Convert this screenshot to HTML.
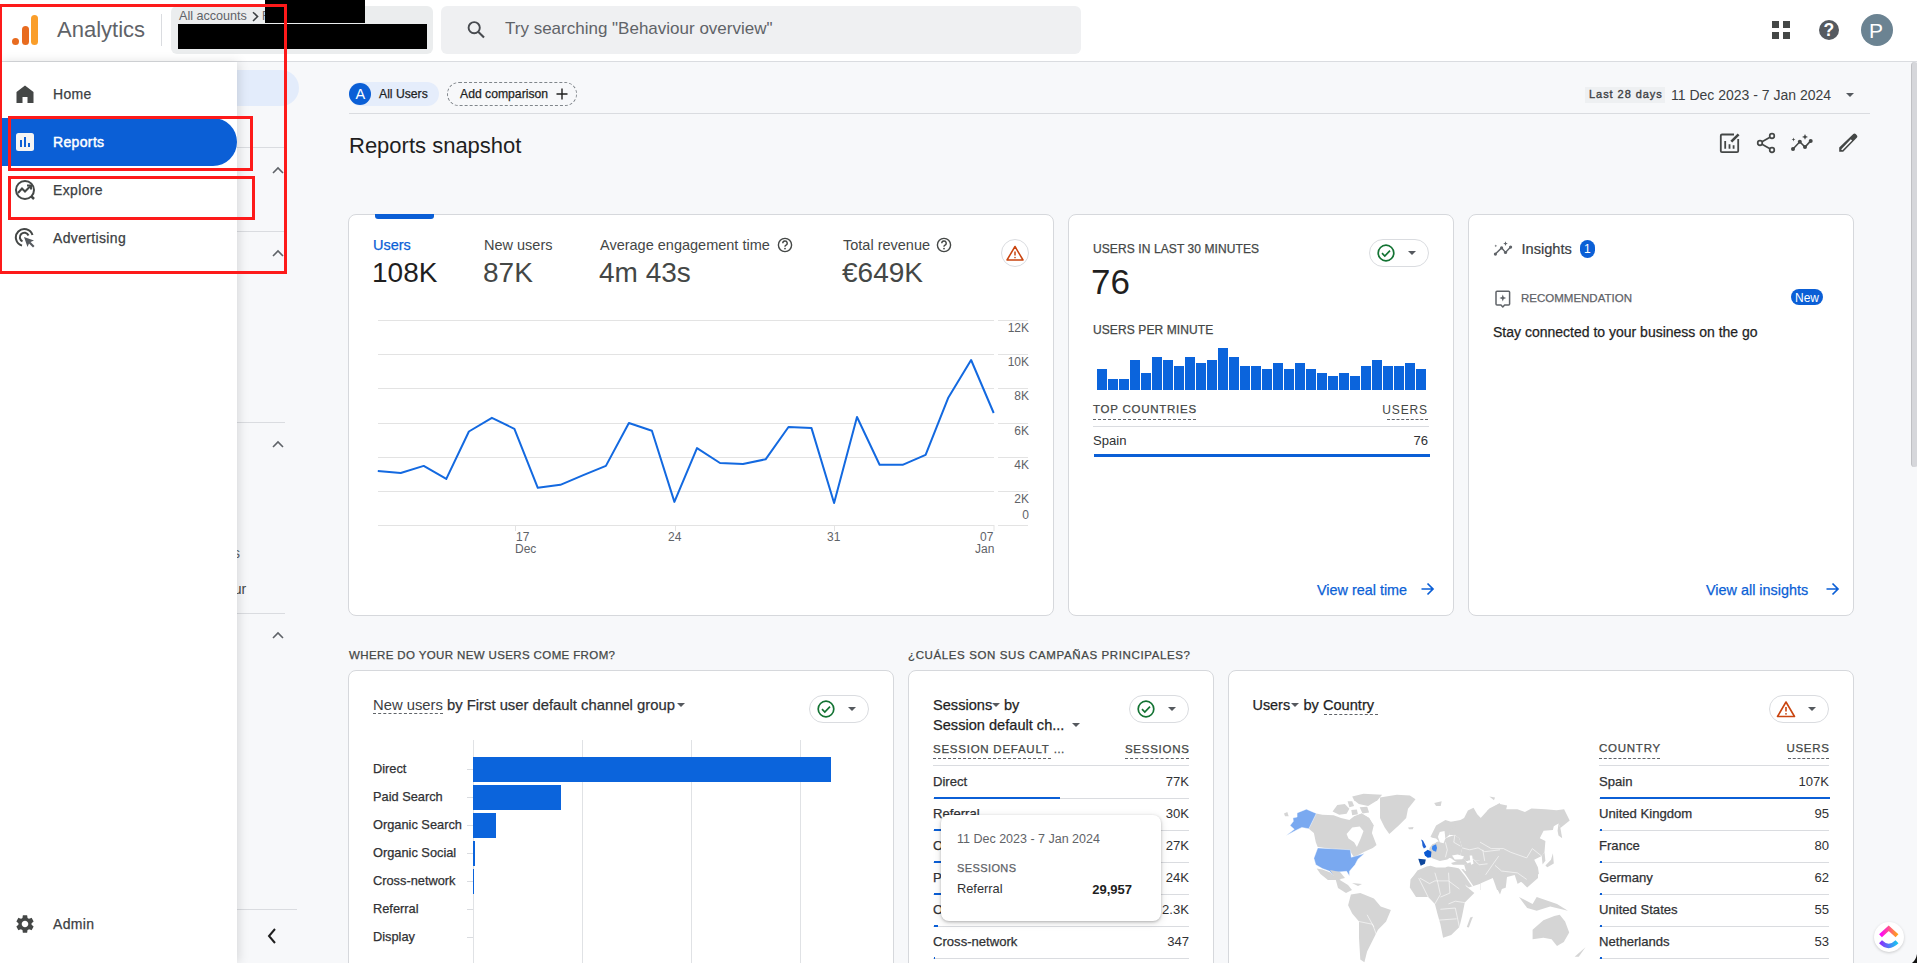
<!DOCTYPE html>
<html><head><meta charset="utf-8">
<style>
*{box-sizing:border-box;margin:0;padding:0}
html,body{width:1917px;height:963px;overflow:hidden;background:#f7f8fa;font-family:"Liberation Sans",sans-serif;color:#1f1f1f}
.a{position:absolute;white-space:nowrap}
.t{position:absolute;white-space:nowrap;line-height:1}
.card{position:absolute;background:#fff;border:1px solid #d6d8dc;border-radius:8px}
.chip{position:absolute;border:1px solid #dadce0;border-radius:15px;background:#fff}
.hl{position:absolute;height:1px;background:#dadce0}
.g{color:#5f6368}
.m{-webkit-text-stroke-width:0.25px}
.dash{position:absolute;height:0;border-top:1px dashed #5f6368}
</style></head><body>

<!-- HEADER -->
<div class="a" style="left:0;top:0;width:1917px;height:61px;background:#fff"></div>
<div class="a" style="left:0;top:61px;width:1917px;height:1px;background:#dadce0"></div>

<!-- logo -->
<div class="a" style="left:12px;top:37.5px;width:7px;height:7px;border-radius:50%;background:#e86b1f"></div>
<div class="a" style="left:21.5px;top:26px;width:7px;height:19px;border-radius:3.5px;background:#e86b1f"></div>
<div class="a" style="left:30.5px;top:15px;width:7.5px;height:30px;border-radius:3.75px;background:#fa9e2a"></div>
<div class="t g" style="left:57px;top:19px;font-size:22px">Analytics</div>
<div class="a" style="left:161px;top:14px;width:1px;height:32px;background:#dadce0"></div>

<!-- account -->
<div class="a" style="left:171px;top:6px;width:262px;height:48px;border-radius:6px;background:#ebedee"></div>
<div class="t g" style="left:179px;top:10px;font-size:12.6px">All accounts</div>
<svg class="a" style="left:251px;top:11px" width="9" height="11" viewBox="0 0 9 11"><path d="M2 1.2 L6.6 5.6 L2 10" fill="none" stroke="#3c4043" stroke-width="1.5"/></svg>
<div class="t g" style="left:262px;top:10px;font-size:12px">F</div>
<div class="a" style="left:265px;top:0;width:100px;height:23px;background:#000"></div>
<div class="a" style="left:178px;top:24px;width:249px;height:25px;background:#000"></div>

<!-- search -->
<div class="a" style="left:441px;top:6px;width:640px;height:48px;border-radius:6px;background:#eff0f2"></div>
<svg class="a" style="left:465px;top:20px" width="22" height="20" viewBox="0 0 22 20"><circle cx="9.2" cy="7.7" r="5.6" fill="none" stroke="#474a4f" stroke-width="1.9"/><path d="M13.2 11.8 L19 17.6" stroke="#474a4f" stroke-width="2.1"/></svg>
<div class="t g" style="left:505px;top:19.5px;font-size:17px">Try searching "Behaviour overview"</div>

<!-- right icons -->
<div class="a" style="left:1772px;top:21px;width:7px;height:7px;background:#444746"></div>
<div class="a" style="left:1783px;top:21px;width:7px;height:7px;background:#444746"></div>
<div class="a" style="left:1772px;top:32px;width:7px;height:7px;background:#444746"></div>
<div class="a" style="left:1783px;top:32px;width:7px;height:7px;background:#444746"></div>
<div class="a" style="left:1819px;top:20px;width:20px;height:20px;border-radius:50%;background:#555a60"></div>
<div class="t" style="left:1823.5px;top:21.5px;font-size:17.5px;font-weight:bold;color:#fff">?</div>
<div class="a" style="left:1861px;top:14px;width:32px;height:32px;border-radius:50%;background:#6b8392"></div>
<div class="t" style="left:1869px;top:20px;font-size:21px;color:#fff">P</div>



<!-- MAIN TOP -->
<div class="a" style="left:349px;top:82px;width:90px;height:24px;border-radius:12px;background:#e5edfb"></div>
<div class="a" style="left:349px;top:83px;width:22px;height:22px;border-radius:50%;background:#0b5fd6"></div>
<div class="t" style="left:355.5px;top:86.5px;font-size:14.5px;color:#fff">A</div>
<div class="t m" style="left:379px;top:88px;font-size:12.2px;color:#1f1f1f">All Users</div>
<div class="a" style="left:447px;top:82px;width:130px;height:24px;border-radius:12px;border:1px dashed #80868b"></div>
<div class="t m" style="left:460px;top:88px;font-size:12.2px;color:#1f1f1f">Add comparison</div>
<svg class="a" style="left:556px;top:88px" width="12" height="12" viewBox="0 0 12 12"><path d="M6 0.5 V11.5 M0.5 6 H11.5" stroke="#1f1f1f" stroke-width="1.4"/></svg>
<div class="hl" style="left:349px;top:113px;width:1521px"></div>

<div class="a" style="left:1585px;top:87px;width:80px;height:16px;background:#eef0f2"></div>
<div class="t" style="left:1589px;top:89px;font-size:11px;color:#3c4043;letter-spacing:0.95px;-webkit-text-stroke-width:0.35px">Last 28 days</div>
<div class="t" style="left:1671px;top:88px;font-size:14px;color:#3c4043">11 Dec 2023 - 7 Jan 2024</div>
<svg class="a" style="left:1845px;top:92px" width="10" height="6" viewBox="0 0 10 6"><path d="M1 1 H9 L5 5 Z" fill="#55595e"/></svg>

<div class="t" style="left:349px;top:135px;font-size:22px;color:#1f1f1f">Reports snapshot</div>

<!-- toolbar icons -->
<svg class="a" style="left:1700px;top:120px" width="170" height="45" viewBox="1700 120 170 45">
<g fill="none" stroke="#444746">
<path d="M1734 134.5 H1722 Q1720.8 134.5 1720.8 135.7 V151 Q1720.8 152.2 1722 152.2 H1737 Q1738.2 152.2 1738.2 151 V139" stroke-width="1.8"/>
<path d="M1725.2 141 V148.7 M1729.5 144.2 V148.7 M1733.6 145.2 V148.7" stroke-width="1.8"/>
<path d="M1731.3 141.6 L1738.6 134.3" stroke-width="2.6"/>
<circle cx="1772" cy="136" r="2.3" stroke-width="1.7"/><circle cx="1760" cy="143" r="2.3" stroke-width="1.7"/><circle cx="1772" cy="150" r="2.3" stroke-width="1.7"/>
<path d="M1762 141.8 L1770 137.2 M1762 144.2 L1770 148.8" stroke-width="1.6"/>
<path d="M1793 149 L1799.8 141.8 L1805 147 L1810.7 140.9" stroke-width="1.6"/>
</g>
<g fill="#444746">
<circle cx="1793" cy="149" r="2"/><circle cx="1799.8" cy="141.8" r="2"/><circle cx="1805" cy="147" r="2"/><circle cx="1810.7" cy="140.9" r="2"/>
<path d="M1805 134 L1805.9 136 L1808 136.9 L1805.9 137.8 L1805 139.8 L1804.1 137.8 L1802 136.9 L1804.1 136 Z"/>
<path d="M1793.5 137.6 L1794 139 L1795.4 139.5 L1794 140 L1793.5 141.4 L1793 140 L1791.6 139.5 L1793 139 Z"/>
<path fill-rule="evenodd" d="M1839.2 151.8 V147.5 L1853.3 133.9 Q1854.5 133 1855.7 134 L1857 135.4 Q1857.8 136.5 1857 137.5 L1843.2 151.8 Z M1841.1 149.6 L1850.8 139.3 L1852.1 140.4 L1842.4 150.2 Z"/>
</g>
</svg>

<!-- CARD 1 -->
<div class="card" style="left:348px;top:214px;width:706px;height:402px"></div>
<div class="a" style="left:375px;top:214px;width:59px;height:5px;border-radius:0 0 3px 3px;background:#0b5fd6"></div>
<div class="t m" style="left:373px;top:238px;font-size:14.5px;color:#0b5fd6">Users</div>
<div class="t" style="left:372px;top:259px;font-size:28px;color:#1f1f1f">108K</div>
<div class="t" style="left:484px;top:238px;font-size:14.5px;color:#444746">New users</div>
<div class="t" style="left:483px;top:259px;font-size:28px;color:#444746">87K</div>
<div class="t" style="left:600px;top:238px;font-size:14.5px;color:#444746">Average engagement time</div>
<div class="t" style="left:599px;top:259px;font-size:28px;color:#444746">4m 43s</div>
<div class="t" style="left:843px;top:238px;font-size:14.5px;color:#444746">Total revenue</div>
<div class="t" style="left:842px;top:259px;font-size:28px;color:#444746">€649K</div>
<svg class="a" style="left:777px;top:237px" width="16" height="16" viewBox="0 0 16 16"><circle cx="8" cy="8" r="6.6" fill="none" stroke="#444746" stroke-width="1.4"/><path d="M5.8 6.3 A2.2 2.2 0 1 1 8.6 8.3 C8 8.6 8 9 8 9.8" fill="none" stroke="#444746" stroke-width="1.4"/><circle cx="8" cy="11.6" r="0.9" fill="#444746"/></svg>
<svg class="a" style="left:936px;top:237px" width="16" height="16" viewBox="0 0 16 16"><circle cx="8" cy="8" r="6.6" fill="none" stroke="#444746" stroke-width="1.4"/><path d="M5.8 6.3 A2.2 2.2 0 1 1 8.6 8.3 C8 8.6 8 9 8 9.8" fill="none" stroke="#444746" stroke-width="1.4"/><circle cx="8" cy="11.6" r="0.9" fill="#444746"/></svg>
<div class="a" style="left:1001px;top:239px;width:28px;height:28px;border-radius:50%;border:1px solid #dadce0;background:#fff"></div>
<svg class="a" style="left:1005px;top:243px" width="20" height="20" viewBox="0 0 20 20"><path d="M10 3.5 L18 17 H2 Z" fill="none" stroke="#c9440f" stroke-width="1.5" stroke-linejoin="round"/><path d="M10 8.5 V12.5" stroke="#c9440f" stroke-width="1.5"/><circle cx="10" cy="14.6" r="0.8" fill="#c9440f"/></svg>
<svg class="a" style="left:0;top:0" width="1917" height="963" viewBox="0 0 1917 963"><path d="M378 320.5 H994 M998 320.5 H1028" stroke="#e3e3e3" stroke-width="1"/><path d="M378 354.5 H994 M998 354.5 H1028" stroke="#e3e3e3" stroke-width="1"/><path d="M378 388.5 H994 M998 388.5 H1028" stroke="#e3e3e3" stroke-width="1"/><path d="M378 423.5 H994 M998 423.5 H1028" stroke="#e3e3e3" stroke-width="1"/><path d="M378 457.5 H994 M998 457.5 H1028" stroke="#e3e3e3" stroke-width="1"/><path d="M378 491.5 H994 M998 491.5 H1028" stroke="#e3e3e3" stroke-width="1"/><path d="M378 525.5 H994 M998 525.5 H1028" stroke="#e3e3e3" stroke-width="1"/><path d="M994 525 V531 M515.5 525 V531 M675.5 525 V531 M834.5 525 V531" stroke="#e3e3e3"/><polyline points="377.8,471.1 400.7,473.0 423.7,465.9 446.3,478.9 468.9,431.5 491.9,417.8 514.4,428.9 537.8,487.8 560.4,484.8 583.3,475.2 605.9,465.9 628.9,423.0 651.9,430.7 674.4,501.9 697.0,448.1 720.0,463.0 743.0,464.1 765.6,459.3 788.5,427.0 811.5,428.1 834.1,503.0 857.0,417.0 879.6,464.8 902.6,464.8 925.6,454.8 948.1,398.1 971.1,360.0 993.7,413.0" fill="none" stroke="#1369e0" stroke-width="2" stroke-linejoin="round"/></svg>
<div class="t g" style="right:888px;top:322.0px;font-size:12px;text-align:right">12K</div><div class="t g" style="right:888px;top:356.0px;font-size:12px;text-align:right">10K</div><div class="t g" style="right:888px;top:390.0px;font-size:12px;text-align:right">8K</div><div class="t g" style="right:888px;top:425.0px;font-size:12px;text-align:right">6K</div><div class="t g" style="right:888px;top:459.0px;font-size:12px;text-align:right">4K</div><div class="t g" style="right:888px;top:493.0px;font-size:12px;text-align:right">2K</div><div class="t g" style="right:888px;top:508.5px;font-size:12px">0</div>
<div class="t g" style="left:516px;top:531px;font-size:12px">17</div>
<div class="t g" style="left:515px;top:543px;font-size:12px">Dec</div>
<div class="t g" style="left:668px;top:531px;font-size:12px">24</div>
<div class="t g" style="left:827px;top:531px;font-size:12px">31</div>
<div class="t g" style="left:980px;top:531px;font-size:12px">07</div>
<div class="t g" style="left:975px;top:543px;font-size:12px">Jan</div>


<!-- CARD REALTIME -->
<div class="card" style="left:1068px;top:214px;width:386px;height:402px"></div>
<div class="t m" style="left:1093px;top:242.5px;font-size:12px;color:#444746;letter-spacing:0.1px">USERS IN LAST 30 MINUTES</div>
<div class="chip" style="left:1369px;top:239px;width:60px;height:28px"></div>
<svg class="a" style="left:1376px;top:243px" width="20" height="20" viewBox="0 0 20 20"><circle cx="10" cy="10" r="7.8" fill="none" stroke="#137333" stroke-width="1.7"/><path d="M6 10.2 L8.8 13 L14 7.6" fill="none" stroke="#137333" stroke-width="1.7"/></svg>
<svg class="a" style="left:1407px;top:250px" width="10" height="6" viewBox="0 0 10 6"><path d="M1 1 H9 L5 5 Z" fill="#55595e"/></svg>
<div class="t" style="left:1091px;top:264px;font-size:35px;color:#1f1f1f">76</div>
<div class="t m" style="left:1093px;top:324px;font-size:12px;color:#444746;letter-spacing:0.1px">USERS PER MINUTE</div>
<div class="a" style="left:1097px;top:369.1px;width:10px;height:20.6px;background:#0b64dc"></div><div class="a" style="left:1108px;top:379.1px;width:10px;height:10.6px;background:#0b64dc"></div><div class="a" style="left:1119px;top:379.1px;width:10px;height:10.6px;background:#0b64dc"></div><div class="a" style="left:1130px;top:360.1px;width:10px;height:29.6px;background:#0b64dc"></div><div class="a" style="left:1141px;top:373.1px;width:10px;height:16.6px;background:#0b64dc"></div><div class="a" style="left:1152px;top:357.0px;width:10px;height:32.7px;background:#0b64dc"></div><div class="a" style="left:1163px;top:360.1px;width:10px;height:29.6px;background:#0b64dc"></div><div class="a" style="left:1174px;top:366.1px;width:10px;height:23.6px;background:#0b64dc"></div><div class="a" style="left:1185px;top:357.0px;width:10px;height:32.7px;background:#0b64dc"></div><div class="a" style="left:1196px;top:363.0px;width:10px;height:26.7px;background:#0b64dc"></div><div class="a" style="left:1207px;top:360.1px;width:10px;height:29.6px;background:#0b64dc"></div><div class="a" style="left:1218px;top:348.1px;width:10px;height:41.6px;background:#0b64dc"></div><div class="a" style="left:1229px;top:357.0px;width:10px;height:32.7px;background:#0b64dc"></div><div class="a" style="left:1240px;top:366.1px;width:10px;height:23.6px;background:#0b64dc"></div><div class="a" style="left:1251px;top:366.1px;width:10px;height:23.6px;background:#0b64dc"></div><div class="a" style="left:1262px;top:369.1px;width:10px;height:20.6px;background:#0b64dc"></div><div class="a" style="left:1273px;top:363.0px;width:10px;height:26.7px;background:#0b64dc"></div><div class="a" style="left:1284px;top:369.1px;width:10px;height:20.6px;background:#0b64dc"></div><div class="a" style="left:1295px;top:363.0px;width:10px;height:26.7px;background:#0b64dc"></div><div class="a" style="left:1306px;top:369.1px;width:10px;height:20.6px;background:#0b64dc"></div><div class="a" style="left:1317px;top:373.1px;width:10px;height:16.6px;background:#0b64dc"></div><div class="a" style="left:1328px;top:376.2px;width:10px;height:13.5px;background:#0b64dc"></div><div class="a" style="left:1339px;top:373.1px;width:10px;height:16.6px;background:#0b64dc"></div><div class="a" style="left:1350px;top:376.2px;width:10px;height:13.5px;background:#0b64dc"></div><div class="a" style="left:1361px;top:366.1px;width:10px;height:23.6px;background:#0b64dc"></div><div class="a" style="left:1372px;top:360.1px;width:10px;height:29.6px;background:#0b64dc"></div><div class="a" style="left:1383px;top:366.1px;width:10px;height:23.6px;background:#0b64dc"></div><div class="a" style="left:1394px;top:366.1px;width:10px;height:23.6px;background:#0b64dc"></div><div class="a" style="left:1405px;top:363.0px;width:10px;height:26.7px;background:#0b64dc"></div><div class="a" style="left:1416px;top:369.1px;width:10px;height:20.6px;background:#0b64dc"></div>
<div class="t m" style="left:1093px;top:404px;font-size:11.5px;color:#444746;letter-spacing:0.75px">TOP COUNTRIES</div>
<div class="a" style="left:1093px;top:419px;width:103px;height:0;border-top:1px dashed #5f6368"></div>
<div class="t" style="right:489px;top:403.5px;font-size:12px;color:#444746;letter-spacing:0.9px">USERS</div>
<div class="a" style="left:1387px;top:419px;width:41px;height:0;border-top:1px dashed #5f6368"></div>
<div class="hl" style="left:1093px;top:426px;width:336px"></div>
<div class="t" style="left:1093px;top:433.5px;font-size:13.1px;color:#303134">Spain</div>
<div class="t" style="right:489px;top:433.5px;font-size:13.1px;color:#303134">76</div>
<div class="a" style="left:1094px;top:454px;width:336px;height:2.5px;background:#0b5fd6"></div>
<div class="t m" style="left:1317px;top:583px;font-size:14.4px;color:#0b5fd6">View real time</div>
<svg class="a" style="left:1420px;top:582px" width="15" height="14" viewBox="0 0 15 14"><path d="M1.5 7 H13 M7.5 1.5 L13 7 L7.5 12.5" fill="none" stroke="#0b5fd6" stroke-width="1.7"/></svg>

<!-- CARD INSIGHTS -->
<div class="card" style="left:1468px;top:214px;width:386px;height:402px"></div>
<svg class="a" style="left:1488px;top:235px" width="30" height="25" viewBox="1488 235 30 25"><path d="M1495.4 254.1 L1501.6 247.9 L1505.5 252.5 L1510.6 247.1" fill="none" stroke="#5f6368" stroke-width="1.4"/><g fill="#5f6368"><circle cx="1495.4" cy="254.1" r="1.6"/><circle cx="1501.6" cy="247.9" r="1.6"/><circle cx="1505.5" cy="252.5" r="1.6"/><circle cx="1510.6" cy="247.1" r="1.6"/><path d="M1505.5 241.3 L1506.2 243 L1507.8 243.6 L1506.2 244.2 L1505.5 245.9 L1504.8 244.2 L1503.2 243.6 L1504.8 243 Z"/><path d="M1495.8 244.5 L1496.2 245.5 L1497.2 245.9 L1496.2 246.3 L1495.8 247.3 L1495.4 246.3 L1494.4 245.9 L1495.4 245.5 Z"/></g></svg>
<div class="t" style="left:1521.5px;top:242px;font-size:14.6px;color:#3c4043;-webkit-text-stroke-width:0.2px">Insights</div>
<div class="a" style="left:1580px;top:240px;width:15px;height:18px;border-radius:8px;background:#0b5fd6"></div>
<div class="t" style="left:1584px;top:243px;font-size:12px;color:#fff">1</div>
<svg class="a" style="left:1488px;top:285px" width="30" height="25" viewBox="1488 285 30 25"><path d="M1497 291.3 H1508.6 Q1509.6 291.3 1509.6 292.3 V304 Q1509.6 305 1508.6 305 H1504.6 L1502.8 307 L1501 305 H1497 Q1496 305 1496 304 V292.3 Q1496 291.3 1497 291.3 Z" fill="none" stroke="#5f6368" stroke-width="1.5" stroke-linejoin="round"/><path d="M1502.8 294.6 L1503.7 297.1 L1506.2 298 L1503.7 298.9 L1502.8 301.4 L1501.9 298.9 L1499.4 298 L1501.9 297.1 Z" fill="#5f6368"/></svg>
<div class="t m" style="left:1521px;top:292.5px;font-size:11.5px;color:#5f6368">RECOMMENDATION</div>
<div class="a" style="left:1791px;top:289px;width:32px;height:16px;border-radius:8px;background:#0b5fd6"></div>
<div class="t" style="left:1795px;top:291.5px;font-size:12px;color:#fff">New</div>
<div class="t m" style="left:1493px;top:325px;font-size:14px;color:#1f1f1f">Stay connected to your business on the go</div>
<div class="t m" style="left:1706px;top:583px;font-size:14.4px;color:#0b5fd6">View all insights</div>
<svg class="a" style="left:1825px;top:582px" width="15" height="14" viewBox="0 0 15 14"><path d="M1.5 7 H13 M7.5 1.5 L13 7 L7.5 12.5" fill="none" stroke="#0b5fd6" stroke-width="1.7"/></svg>


<!-- BOTTOM SECTION -->
<div class="t m" style="left:349px;top:649.5px;font-size:11.5px;color:#444746;letter-spacing:0.38px">WHERE DO YOUR NEW USERS COME FROM?</div>
<div class="t m" style="left:908px;top:649.5px;font-size:11.5px;color:#444746;letter-spacing:0.62px">¿CUÁLES SON SUS CAMPAÑAS PRINCIPALES?</div>

<div class="card" style="left:348px;top:670px;width:546px;height:320px"></div>
<div class="t" style="left:373px;top:698px;font-size:14.8px;color:#303134"><span style="color:#3c4043">New users</span> <span class="m">by First user default channel group</span></div>
<div class="dash" style="left:373px;top:713px;width:70px"></div>
<svg class="a" style="left:676px;top:702px" width="10" height="6" viewBox="0 0 10 6"><path d="M1 1 H9 L5 5 Z" fill="#55595e"/></svg>
<div class="chip" style="left:809px;top:695px;width:60px;height:28px"></div>
<svg class="a" style="left:816px;top:699px" width="20" height="20" viewBox="0 0 20 20"><circle cx="10" cy="10" r="7.8" fill="none" stroke="#137333" stroke-width="1.7"/><path d="M6 10.2 L8.8 13 L14 7.6" fill="none" stroke="#137333" stroke-width="1.7"/></svg>
<svg class="a" style="left:847px;top:706px" width="10" height="6" viewBox="0 0 10 6"><path d="M1 1 H9 L5 5 Z" fill="#55595e"/></svg>
<div class="a" style="left:473px;top:740px;width:1px;height:223px;background:#e0e2e5"></div><div class="a" style="left:582px;top:740px;width:1px;height:223px;background:#e0e2e5"></div><div class="a" style="left:691px;top:740px;width:1px;height:223px;background:#e0e2e5"></div><div class="a" style="left:800px;top:740px;width:1px;height:223px;background:#e0e2e5"></div>
<div class="t m" style="left:373px;top:763.3px;font-size:12.8px;color:#303134">Direct</div><div class="a" style="left:467px;top:769px;width:6px;height:1px;background:#dadce0"></div><div class="a" style="left:473px;top:756.5px;width:358px;height:25px;background:#0b64dc"></div><div class="t m" style="left:373px;top:791.3px;font-size:12.8px;color:#303134">Paid Search</div><div class="a" style="left:467px;top:797px;width:6px;height:1px;background:#dadce0"></div><div class="a" style="left:473px;top:784.5px;width:88px;height:25px;background:#0b64dc"></div><div class="t m" style="left:373px;top:819.3px;font-size:12.8px;color:#303134">Organic Search</div><div class="a" style="left:467px;top:825px;width:6px;height:1px;background:#dadce0"></div><div class="a" style="left:473px;top:812.5px;width:23px;height:25px;background:#0b64dc"></div><div class="t m" style="left:373px;top:847.3px;font-size:12.8px;color:#303134">Organic Social</div><div class="a" style="left:467px;top:853px;width:6px;height:1px;background:#dadce0"></div><div class="a" style="left:473px;top:840.5px;width:2px;height:25px;background:#0b64dc"></div><div class="t m" style="left:373px;top:875.3px;font-size:12.8px;color:#303134">Cross-network</div><div class="a" style="left:467px;top:881px;width:6px;height:1px;background:#dadce0"></div><div class="a" style="left:473px;top:868.5px;width:1px;height:25px;background:#0b64dc"></div><div class="t m" style="left:373px;top:903.3px;font-size:12.8px;color:#303134">Referral</div><div class="a" style="left:467px;top:909px;width:6px;height:1px;background:#dadce0"></div><div class="t m" style="left:373px;top:931.3px;font-size:12.8px;color:#303134">Display</div><div class="a" style="left:467px;top:937px;width:6px;height:1px;background:#dadce0"></div>

<div class="card" style="left:908px;top:670px;width:306px;height:320px"></div>
<div class="t m" style="left:933px;top:698px;font-size:14.6px;color:#1f1f1f">Sessions</div>
<svg class="a" style="left:991px;top:702px" width="10" height="6" viewBox="0 0 10 6"><path d="M1 1 H9 L5 5 Z" fill="#55595e"/></svg>
<div class="t m" style="left:1004px;top:698px;font-size:14.6px;color:#1f1f1f">by</div>
<div class="t m" style="left:933px;top:718px;font-size:14.6px;color:#1f1f1f">Session default ch...</div>
<svg class="a" style="left:1071px;top:722px" width="10" height="6" viewBox="0 0 10 6"><path d="M1 1 H9 L5 5 Z" fill="#55595e"/></svg>
<div class="chip" style="left:1129px;top:695px;width:60px;height:28px"></div>
<svg class="a" style="left:1136px;top:699px" width="20" height="20" viewBox="0 0 20 20"><circle cx="10" cy="10" r="7.8" fill="none" stroke="#137333" stroke-width="1.7"/><path d="M6 10.2 L8.8 13 L14 7.6" fill="none" stroke="#137333" stroke-width="1.7"/></svg>
<svg class="a" style="left:1167px;top:706px" width="10" height="6" viewBox="0 0 10 6"><path d="M1 1 H9 L5 5 Z" fill="#55595e"/></svg>
<div class="t m" style="left:933px;top:743.5px;font-size:11.5px;color:#444746;letter-spacing:0.75px">SESSION DEFAULT …</div>
<div class="dash" style="left:933px;top:758px;width:118px"></div>
<div class="t m" style="right:728px;top:743.5px;font-size:11.5px;color:#444746;letter-spacing:0.75px;margin-right:-0.75px">SESSIONS</div>
<div class="dash" style="left:1125px;top:758px;width:64px"></div>
<div class="hl" style="left:933px;top:765px;width:256px"></div>
<div class="t m" style="left:933px;top:775.1px;font-size:13.1px;color:#303134">Direct</div><div class="t" style="right:728px;top:775.1px;font-size:13.1px;color:#303134">77K</div><div class="hl" style="left:933px;top:798px;width:256px"></div><div class="a" style="left:934px;top:796.5px;width:126px;height:2.5px;background:#0b5fd6"></div><div class="t m" style="left:933px;top:807.1px;font-size:13.1px;color:#303134">Referral</div><div class="t" style="right:728px;top:807.1px;font-size:13.1px;color:#303134">30K</div><div class="hl" style="left:933px;top:830px;width:256px"></div><div class="a" style="left:934px;top:828.5px;width:49px;height:2.5px;background:#0b5fd6"></div><div class="t m" style="left:933px;top:839.1px;font-size:13.1px;color:#303134">Organic Search</div><div class="t" style="right:728px;top:839.1px;font-size:13.1px;color:#303134">27K</div><div class="hl" style="left:933px;top:862px;width:256px"></div><div class="a" style="left:934px;top:860.5px;width:44px;height:2.5px;background:#0b5fd6"></div><div class="t m" style="left:933px;top:871.1px;font-size:13.1px;color:#303134">Paid Search</div><div class="t" style="right:728px;top:871.1px;font-size:13.1px;color:#303134">24K</div><div class="hl" style="left:933px;top:894px;width:256px"></div><div class="a" style="left:934px;top:892.5px;width:39px;height:2.5px;background:#0b5fd6"></div><div class="t m" style="left:933px;top:903.1px;font-size:13.1px;color:#303134">Organic Social</div><div class="t" style="right:728px;top:903.1px;font-size:13.1px;color:#303134">2.3K</div><div class="hl" style="left:933px;top:926px;width:256px"></div><div class="a" style="left:934px;top:924.5px;width:4px;height:2.5px;background:#0b5fd6"></div><div class="t m" style="left:933px;top:935.1px;font-size:13.1px;color:#303134">Cross-network</div><div class="t" style="right:728px;top:935.1px;font-size:13.1px;color:#303134">347</div><div class="hl" style="left:933px;top:958px;width:256px"></div><div class="a" style="left:934px;top:956.5px;width:1px;height:2.5px;background:#0b5fd6"></div>
<div class="a" style="left:941px;top:815px;width:220px;height:106px;border-radius:8px;background:#fff;box-shadow:0 1px 3px rgba(0,0,0,0.25),0 2px 8px rgba(0,0,0,0.12)"></div>
<div class="t" style="left:957px;top:832.5px;font-size:12.5px;color:#5f6368;letter-spacing:0px">11 Dec 2023 - 7 Jan 2024</div>
<div class="t m" style="left:957px;top:862.5px;font-size:11px;color:#5f6368;letter-spacing:0.4px">SESSIONS</div>
<div class="t" style="left:957px;top:883px;font-size:12.8px;color:#303134">Referral</div>
<div class="t" style="right:785px;top:883px;font-size:13px;font-weight:bold;color:#1f1f1f">29,957</div>

<div class="card" style="left:1228px;top:670px;width:626px;height:320px"></div>
<div class="t m" style="left:1252.5px;top:698px;font-size:14.4px;color:#1f1f1f">Users</div>
<svg class="a" style="left:1290px;top:702px" width="10" height="6" viewBox="0 0 10 6"><path d="M1 1 H9 L5 5 Z" fill="#55595e"/></svg>
<div class="t m" style="left:1303.5px;top:698px;font-size:14.6px;color:#1f1f1f">by Country</div>
<div class="dash" style="left:1324px;top:714px;width:54px"></div>
<div class="chip" style="left:1769px;top:695px;width:60px;height:28px"></div>
<svg class="a" style="left:1775px;top:698px" width="22" height="22" viewBox="0 0 22 22"><path d="M11 4 L19.5 18.5 H2.5 Z" fill="none" stroke="#c9440f" stroke-width="1.6" stroke-linejoin="round"/><path d="M11 9 V13.5" stroke="#c9440f" stroke-width="1.6"/><circle cx="11" cy="15.8" r="0.9" fill="#c9440f"/></svg>
<svg class="a" style="left:1807px;top:706px" width="10" height="6" viewBox="0 0 10 6"><path d="M1 1 H9 L5 5 Z" fill="#55595e"/></svg>
<div class="t m" style="left:1599px;top:743px;font-size:11.5px;color:#444746;letter-spacing:0.75px">COUNTRY</div>
<div class="dash" style="left:1599px;top:758px;width:61px"></div>
<div class="t m" style="right:88px;top:743px;font-size:11.5px;color:#444746;letter-spacing:0.75px;margin-right:-0.75px">USERS</div>
<div class="dash" style="left:1788px;top:758px;width:41px"></div>
<div class="hl" style="left:1599px;top:765px;width:230px"></div>
<div class="t m" style="left:1599px;top:775.2px;font-size:13.1px;color:#303134">Spain</div><div class="t" style="right:88px;top:775.2px;font-size:13.1px;color:#303134">107K</div><div class="hl" style="left:1599px;top:798px;width:230px"></div><div class="a" style="left:1600px;top:796.5px;width:230px;height:2.5px;background:#0b5fd6"></div><div class="t m" style="left:1599px;top:807.2px;font-size:13.1px;color:#303134">United Kingdom</div><div class="t" style="right:88px;top:807.2px;font-size:13.1px;color:#303134">95</div><div class="hl" style="left:1599px;top:830px;width:230px"></div><div class="a" style="left:1600px;top:828.5px;width:2px;height:2.5px;background:#0b5fd6"></div><div class="t m" style="left:1599px;top:839.2px;font-size:13.1px;color:#303134">France</div><div class="t" style="right:88px;top:839.2px;font-size:13.1px;color:#303134">80</div><div class="hl" style="left:1599px;top:862px;width:230px"></div><div class="a" style="left:1600px;top:860.5px;width:2px;height:2.5px;background:#0b5fd6"></div><div class="t m" style="left:1599px;top:871.2px;font-size:13.1px;color:#303134">Germany</div><div class="t" style="right:88px;top:871.2px;font-size:13.1px;color:#303134">62</div><div class="hl" style="left:1599px;top:894px;width:230px"></div><div class="a" style="left:1600px;top:892.5px;width:2px;height:2.5px;background:#0b5fd6"></div><div class="t m" style="left:1599px;top:903.2px;font-size:13.1px;color:#303134">United States</div><div class="t" style="right:88px;top:903.2px;font-size:13.1px;color:#303134">55</div><div class="hl" style="left:1599px;top:926px;width:230px"></div><div class="a" style="left:1600px;top:924.5px;width:2px;height:2.5px;background:#0b5fd6"></div><div class="t m" style="left:1599px;top:935.2px;font-size:13.1px;color:#303134">Netherlands</div><div class="t" style="right:88px;top:935.2px;font-size:13.1px;color:#303134">53</div><div class="hl" style="left:1599px;top:958px;width:230px"></div><div class="a" style="left:1600px;top:956.5px;width:2px;height:2.5px;background:#0b5fd6"></div>
<!-- MAP -->
<svg class="a" style="left:0;top:0" width="1917" height="963" viewBox="0 0 1917 963"><polygon points="1316.3,813.4 1322.3,814.8 1333.6,815.2 1341.0,818.0 1349.4,819.9 1354.1,816.2 1361.6,813.4 1369.1,818.0 1373.7,825.5 1371.9,833.0 1376.5,845.1 1372.8,847.9 1364.4,851.7 1354.1,857.3 1350.4,851.7 1317.7,847.0 1315.8,842.3 1313.9,833.0 1308.8,828.8" fill="#d5d5d5" stroke="none" stroke-width="0" stroke-linejoin="round"/><polygon points="1346.6,833.9 1352.2,827.4 1359.7,826.4 1363.5,831.1 1360.7,838.6 1356.9,847.0 1354.1,842.3 1348.5,838.6" fill="#fff" stroke="none" stroke-width="0" stroke-linejoin="round"/><polygon points="1354.1,817.1 1361.6,813.4 1369.1,818.0 1373.7,825.5 1369.1,829.3 1363.5,822.7 1356.9,819.9" fill="#d5d5d5"/><polygon points="1332.6,811.5 1337.3,805.0 1344.8,804.0 1349.4,808.7 1346.6,813.8 1339.2,814.8" fill="#d5d5d5"/><polygon points="1352.2,796.5 1363.5,793.7 1382.1,794.7 1377.5,800.3 1368.1,805.9 1358.8,804.0 1354.1,800.3" fill="#d5d5d5"/><polygon points="1347.6,801.2 1352.2,801.2 1354.1,805.9 1349.4,807.3" fill="#d5d5d5"/><polygon points="1359.7,807.3 1367.2,806.8 1369.1,812.4 1362.5,813.4" fill="#d5d5d5"/><polygon points="1351.3,810.1 1356.9,809.6 1357.9,814.3 1352.2,815.2" fill="#d5d5d5"/><polygon points="1284.0,813.4 1287.3,812.0 1288.7,816.2 1285.0,816.2" fill="#d5d5d5" stroke="none" stroke-width="0" stroke-linejoin="round"/><polygon points="1290.1,825.5 1293.4,821.3 1292.9,818.0 1297.1,817.1 1297.1,812.9 1306.4,809.2 1316.3,813.4 1308.8,828.8 1301.8,827.4 1296.2,830.2 1285.9,835.8 1294.3,829.3" fill="#7aa9f0" stroke="#fff" stroke-width="0.4" stroke-linejoin="round"/><polygon points="1316.7,868.5 1322.3,869.4 1329.8,872.2 1335.4,876.9 1341.0,880.0 1327.9,880.0 1320.5,874.1" fill="#d5d5d5" stroke="none" stroke-width="0" stroke-linejoin="round"/><polygon points="1317.7,847.9 1350.4,849.8 1351.3,857.3 1364.4,853.6 1357.9,859.2 1355.0,864.8 1349.4,871.3 1349.4,876.0 1346.6,871.3 1335.4,872.2 1332.6,875.0 1329.8,871.3 1322.3,868.5 1315.8,864.8 1313.9,858.2" fill="#7aa9f0" stroke="#fff" stroke-width="0.4" stroke-linejoin="round"/><polygon points="1335,877 1348,885 1352,890 1346,893 1338,888" fill="#d5d5d5"/><polygon points="1330,870 1340,872 1345,878 1336,880" fill="#d5d5d5"/><polygon points="1352,883 1362,884 1358,886" fill="#d5d5d5"/><polygon points="1380.0,797.5 1396.8,794.7 1409.9,795.6 1415.5,799.3 1408.0,808.7 1406.2,818.0 1398.7,825.5 1389.3,833.9 1384.7,827.4 1380.0,818.0" fill="#d5d5d5" stroke="none" stroke-width="0" stroke-linejoin="round"/><polygon points="1408.0,827.4 1413.6,826.9 1412.7,829.3 1409.0,829.3" fill="#d5d5d5" stroke="none" stroke-width="0" stroke-linejoin="round"/><polygon points="1434.2,803.1 1441.7,801.2 1440.7,805.9 1436.1,805.9" fill="#d5d5d5" stroke="none" stroke-width="0" stroke-linejoin="round"/><polygon points="1489.3,796.5 1495.0,797.5 1494.0,800.3" fill="#d5d5d5" stroke="none" stroke-width="0" stroke-linejoin="round"/><polygon points="1451.0,821.8 1460.4,819.9 1464.1,818.0 1467.9,810.6 1473.5,807.8 1477.2,814.3 1482.8,819.9 1487.5,810.6 1500.0,803.1 1500.0,857.3 1473.5,861.0 1466.0,861.0 1460.4,855.4 1462.2,847.9 1459.4,838.6 1454.8,834.9 1449.2,834.9" fill="#d5d5d5" stroke="none" stroke-width="0" stroke-linejoin="round"/><polygon points="1430.5,836.7 1436.1,825.5 1445.4,819.9 1451.0,821.8 1456.6,825.5 1451.0,829.3 1449.2,834.9 1445.4,838.6 1439.8,842.3 1436.1,838.6 1432.3,837.7" fill="#d5d5d5" stroke="none" stroke-width="0" stroke-linejoin="round"/><polygon points="1431.4,847.9 1436.1,842.3 1440.7,840.5 1449.2,836.7 1454.8,834.9 1459.4,838.6 1462.2,847.9 1460.4,855.4 1466.0,861.0 1464.1,864.8 1454.8,861.0 1451.0,858.2 1445.4,857.3 1437.9,857.3 1432.3,853.6" fill="#d5d5d5" stroke="none" stroke-width="0" stroke-linejoin="round"/><polygon points="1451.0,862.9 1464.1,859.2 1467.9,863.8 1464.1,864.8 1452.9,864.8" fill="#d5d5d5" stroke="none" stroke-width="0" stroke-linejoin="round"/><polygon points="1480.0,818.7 1489.3,808.4 1498.7,803.7 1507.1,805.6 1506.2,809.3 1517.4,809.3 1524.9,812.1 1531.4,808.4 1545.4,809.3 1556.6,810.3 1564.1,809.3 1569.7,820.6 1560.4,828.0 1558.5,823.4 1553.8,826.2 1552.9,829.9 1543.6,830.8 1539.8,838.3 1545.4,841.1 1544.5,852.3 1541.7,856.1 1534.2,859.8 1537.9,867.3 1538.9,873.8 1532.3,879.4 1524.9,879.4 1517.4,884.1 1498.7,890.0 1480.0,890.0" fill="#d5d5d5" stroke="none" stroke-width="0" stroke-linejoin="round"/><polygon points="1558.5,823.4 1560.4,828.0 1562.2,838.3 1558.5,835.5 1557.6,830.8" fill="#d5d5d5" stroke="none" stroke-width="0" stroke-linejoin="round"/><polygon points="1552.9,853.3 1553.8,863.6 1547.3,867.3 1545.4,865.4 1551.0,859.8" fill="#d5d5d5" stroke="none" stroke-width="0" stroke-linejoin="round"/><polygon points="1541.7,856.1 1544.5,852.3 1545.4,860.7 1542.6,864.5" fill="#d5d5d5" stroke="none" stroke-width="0" stroke-linejoin="round"/><polygon points="1350.9,894.4 1360.3,893.1 1373.9,898.5 1380.7,906.6 1390.9,910.0 1386.1,921.5 1378.0,929.7 1372.6,940.5 1367.1,951.4 1364.4,962.2 1360.3,959.5 1359.0,937.8 1359.0,921.5 1352.2,913.4 1348.1,905.3" fill="#d5d5d5" stroke="none" stroke-width="0" stroke-linejoin="round"/><polygon points="1410.5,879.5 1418.7,870.0 1459.4,870.0 1466.1,886.3 1474.3,893.1 1464.8,902.6 1462.1,916.1 1459.4,927.0 1451.2,935.1 1443.1,937.8 1440.4,924.3 1437.7,914.8 1434.9,903.9 1428.2,897.1 1416.0,897.1 1409.8,887.6" fill="#d5d5d5" stroke="none" stroke-width="0" stroke-linejoin="round"/><polygon points="1410.8,880.0 1417.4,870.4 1426.7,866.6 1436.1,864.8 1454.8,867.6 1464.1,869.4 1468.8,880.0" fill="#d5d5d5" stroke="none" stroke-width="0" stroke-linejoin="round"/><polygon points="1464.1,864.8 1473.5,861.0 1500.0,857.3 1500.0,880.0 1468.8,880.0" fill="#d5d5d5" stroke="none" stroke-width="0" stroke-linejoin="round"/><polygon points="1466.8,927.0 1470.2,917.5 1472.9,916.8 1468.8,927.6" fill="#d5d5d5" stroke="none" stroke-width="0" stroke-linejoin="round"/><polygon points="1459.4,870.0 1482.4,874.1 1481.1,883.6 1468.8,887.6 1462.1,882.2" fill="#d5d5d5" stroke="none" stroke-width="0" stroke-linejoin="round"/><polygon points="1490.5,870.0 1509.5,875.4 1502.8,886.3 1500.0,894.4 1494.6,883.6" fill="#d5d5d5" stroke="none" stroke-width="0" stroke-linejoin="round"/><polygon points="1513.6,875.4 1538.0,870.0 1538.0,878.1 1527.2,887.6 1523.1,883.6" fill="#d5d5d5" stroke="none" stroke-width="0" stroke-linejoin="round"/><polygon points="1519.0,897.1 1527.2,908.0 1536.7,910.7 1550.2,906.6 1567.9,910.7 1557.0,903.9 1536.7,897.1 1532.6,903.9" fill="#d5d5d5" stroke="none" stroke-width="0" stroke-linejoin="round"/><polygon points="1532.6,929.7 1543.4,920.2 1554.3,916.1 1559.7,914.8 1565.1,921.5 1569.2,932.4 1563.8,941.9 1557.0,946.0 1551.6,939.2 1543.4,937.8 1532.6,939.2" fill="#d5d5d5" stroke="none" stroke-width="0" stroke-linejoin="round"/><polygon points="1574.6,956.8 1585.5,947.3 1578.7,956.8" fill="#d5d5d5" stroke="none" stroke-width="0" stroke-linejoin="round"/><polyline points="1420.0,878.1 1429.5,883.6 1434.9,880.9 1448.5,880.9 1459.4,889.0" fill="none" stroke="#fff" stroke-width="0.6"/><polyline points="1434.9,872.7 1437.7,882.2 1440.4,894.4 1434.9,903.9" fill="none" stroke="#fff" stroke-width="0.6"/><polyline points="1448.5,872.7 1449.9,893.1 1440.4,897.1" fill="none" stroke="#fff" stroke-width="0.6"/><polyline points="1418.7,878.1 1428.2,897.1" fill="none" stroke="#fff" stroke-width="0.6"/><polyline points="1440.4,909.3 1455.3,908.0 1459.4,927.0" fill="none" stroke="#fff" stroke-width="0.6"/><polyline points="1437.7,920.2 1456.6,918.8" fill="none" stroke="#fff" stroke-width="0.6"/><polyline points="1448.5,903.9 1455.3,901.2 1464.8,902.6" fill="none" stroke="#fff" stroke-width="0.6"/><polyline points="1480.0,842.1 1491.2,848.6 1503.4,848.6 1510.8,852.3 1526.7,857.9 1532.3,848.6 1541.7,856.1" fill="none" stroke="#fff" stroke-width="0.6"/><polyline points="1498.7,856.1 1492.1,865.4 1485.6,874.8" fill="none" stroke="#fff" stroke-width="0.6"/><polyline points="1495.0,865.4 1501.5,871.0 1517.4,872.9 1526.7,879.4" fill="none" stroke="#fff" stroke-width="0.6"/><polyline points="1359.0,921.5 1372.6,924.3 1376.6,935.1" fill="none" stroke="#fff" stroke-width="0.6"/><polyline points="1367.1,914.8 1373.9,927.0" fill="none" stroke="#fff" stroke-width="0.6"/><polygon points="1429.5,847.9 1432.3,844.2 1437.9,842.3 1445.4,840.5 1451.0,842.3 1452.9,855.4 1447.3,859.6 1439.8,861.0 1432.3,858.2 1428.6,855.4" fill="#d5d5d5"/><polygon points="1421.1,839.5 1423.0,840.5 1426.3,847.0 1423.9,848.4 1422.5,846.1 1422.1,842.3" fill="#1f60d3" stroke="none" stroke-width="0" stroke-linejoin="round"/><polygon points="1432.3,846.1 1436.1,844.2 1437.0,847.9 1436.1,851.7 1433.3,850.7 1431.9,848.9" fill="#3b85ef" stroke="none" stroke-width="0" stroke-linejoin="round"/><polygon points="1423.9,852.6 1427.7,849.8 1431.4,851.7 1430.9,857.3 1427.7,857.8 1424.9,855.4" fill="#0b59d2" stroke="none" stroke-width="0" stroke-linejoin="round"/><polygon points="1418.3,858.7 1425.8,859.6 1424.9,863.8 1420.7,865.7 1419.3,862.0" fill="#0e479c" stroke="none" stroke-width="0" stroke-linejoin="round"/><polygon points="1439.8,832.1 1444.5,831.1 1445.4,838.6 1443.6,843.3 1439.8,842.3 1437.9,836.7" fill="#fff"/><polygon points="1452.0,855.4 1457.6,854.5 1464.1,856.4 1462.2,859.2 1454.8,859.6" fill="#fff"/><polygon points="1469.7,855.4 1472.1,855.4 1473.5,863.8 1471.1,864.8 1470.2,861.0" fill="#fff"/><polygon points="1432.3,862.0 1445.4,861.0 1451.0,864.8 1445.4,867.6 1436.1,867.6 1430.5,865.7" fill="#fff"/><polyline points="1445.4,842.3 1447.3,849.8 1445.4,857.3" fill="none" stroke="#fff" stroke-width="0.6"/><polyline points="1454.8,834.9 1453.8,842.3 1460.4,846.1" fill="none" stroke="#fff" stroke-width="0.6"/><polyline points="1462.2,847.9 1469.7,849.8 1478.1,847.9 1484.7,851.7 1500.0,849.8" fill="none" stroke="#fff" stroke-width="0.6"/><polyline points="1467.9,861.0 1473.5,859.2 1479.1,864.8 1487.5,863.8" fill="none" stroke="#fff" stroke-width="0.6"/><polyline points="1482.8,849.8 1484.7,861.0" fill="none" stroke="#fff" stroke-width="0.6"/><polygon points="1480.4,883.6 1492.8,877.9 1498.5,894 1480.4,894" fill="#fff"/><polygon points="1507,876.9 1514.7,875 1518.5,886.4 1509,894 1505,894" fill="#fff"/><path d="M1457.6 865.5 L1465 875 L1472.8 886.4" stroke="#fff" stroke-width="1.3" fill="none"/></svg>
<!-- clickup -->
<div class="a" style="left:1874px;top:922px;width:30px;height:30px;border-radius:50%;background:#fff;box-shadow:0 1px 3px rgba(0,0,0,0.18)"></div>
<svg class="a" style="left:1874px;top:922px" width="30" height="30" viewBox="0 0 30 30"><defs><linearGradient id="cu1" x1="0" x2="1"><stop offset="0" stop-color="#f0f"/><stop offset="1" stop-color="#ffa11a"/></linearGradient><linearGradient id="cu2" x1="0" x2="1"><stop offset="0" stop-color="#8930fd"/><stop offset="1" stop-color="#19c4f0"/></linearGradient></defs><path d="M6.5 13.8 L14.7 6.3 L23 13.8" fill="none" stroke="url(#cu1)" stroke-width="4.2"/><path d="M6.5 19.8 Q14.7 28 23 19.8" fill="none" stroke="url(#cu2)" stroke-width="4.2"/></svg>

<!-- SECONDARY NAV (behind drawer) -->
<div class="a" style="left:150px;top:70px;width:149px;height:36px;border-radius:18px;background:#e3ecfb"></div>
<div class="hl" style="left:237px;top:147px;width:48px"></div>
<div class="hl" style="left:237px;top:231px;width:48px"></div>
<div class="hl" style="left:237px;top:422px;width:48px"></div>
<div class="hl" style="left:237px;top:613px;width:48px"></div>
<div class="hl" style="left:237px;top:909px;width:60px"></div>
<svg class="a" style="left:271px;top:165px" width="14" height="10" viewBox="0 0 14 10"><path d="M2 8 L7 3 L12 8" fill="none" stroke="#5f6368" stroke-width="1.6"/></svg>
<svg class="a" style="left:271px;top:248px" width="14" height="10" viewBox="0 0 14 10"><path d="M2 8 L7 3 L12 8" fill="none" stroke="#5f6368" stroke-width="1.6"/></svg>
<svg class="a" style="left:271px;top:439px" width="14" height="10" viewBox="0 0 14 10"><path d="M2 8 L7 3 L12 8" fill="none" stroke="#5f6368" stroke-width="1.6"/></svg>
<svg class="a" style="left:271px;top:630px" width="14" height="10" viewBox="0 0 14 10"><path d="M2 8 L7 3 L12 8" fill="none" stroke="#5f6368" stroke-width="1.6"/></svg>
<div class="t" style="left:233px;top:546px;font-size:14px;color:#5f6368">s</div>
<div class="t" style="left:226px;top:582px;font-size:14px;color:#444746">our</div>
<svg class="a" style="left:265px;top:927px" width="14" height="18" viewBox="0 0 14 18"><path d="M10 2 L4 9 L10 16" fill="none" stroke="#1f1f1f" stroke-width="2"/></svg>

<!-- DRAWER -->
<div class="a" style="left:0;top:62px;width:237px;height:901px;background:#fff;box-shadow:2px 0 10px rgba(0,0,0,0.13)"></div>
<div class="a" style="left:0;top:118px;width:237px;height:48px;border-radius:0 24px 24px 0;background:#0b5fd6"></div>
<!-- home icon -->
<svg class="a" style="left:16px;top:85px" width="18" height="18" viewBox="0 0 18 18"><path d="M9 0.5 L17.5 7 V18 H11.5 V12 H6.5 V18 H0.5 V7 Z" fill="#444746"/></svg>
<div class="t m" style="left:53px;top:87px;font-size:14px;color:#3c4043;letter-spacing:0.35px">Home</div>
<!-- reports icon -->
<div class="a" style="left:16px;top:133px;width:18px;height:18px;border-radius:2.5px;background:#f4f4f4"></div>
<div class="a" style="left:20px;top:140px;width:2px;height:7px;background:#0b5fd6"></div>
<div class="a" style="left:24px;top:137px;width:2px;height:10px;background:#0b5fd6"></div>
<div class="a" style="left:28px;top:143px;width:2px;height:4px;background:#0b5fd6"></div>
<div class="t" style="left:53px;top:135px;font-size:14px;color:#fff;letter-spacing:0.35px;-webkit-text-stroke-width:0.45px">Reports</div>
<!-- explore icon -->
<svg class="a" style="left:14px;top:179px" width="22" height="22" viewBox="0 0 22 22"><circle cx="11" cy="11" r="9" fill="none" stroke="#444746" stroke-width="2"/><path d="M4 14 L8 9.5 L11 12.5 L16 7.5" fill="none" stroke="#444746" stroke-width="2"/><path d="M13 6.5 H17 V10.5" fill="none" stroke="#444746" stroke-width="2"/><path d="M17 17 L20 20" stroke="#444746" stroke-width="2.5"/></svg>
<div class="t m" style="left:53px;top:183px;font-size:14px;color:#3c4043;letter-spacing:0.35px">Explore</div>
<!-- advertising icon -->
<svg class="a" style="left:14px;top:227px" width="22" height="22" viewBox="0 0 22 22"><path d="M18.5 8 A8.5 8.5 0 1 0 8 18.6" fill="none" stroke="#444746" stroke-width="2"/><path d="M14.5 8.5 A4.5 4.5 0 1 0 8.5 14.3" fill="none" stroke="#444746" stroke-width="2"/><path d="M10 10 L20 13.5 L16.5 15 L20.5 19 L19 20.5 L15 16.5 L13.5 20 Z" fill="#55595e"/></svg>
<div class="t m" style="left:53px;top:231px;font-size:14px;color:#3c4043;letter-spacing:0.35px">Advertising</div>
<!-- admin -->
<svg class="a" style="left:14px;top:913px" width="22" height="22" viewBox="0 0 24 24"><path fill="#444746" d="M19.14 12.94c.04-.3.06-.61.06-.94 0-.32-.02-.64-.07-.94l2.03-1.58a.49.49 0 0 0 .12-.61l-1.92-3.32a.488.488 0 0 0-.59-.22l-2.39.96c-.5-.38-1.03-.7-1.62-.94l-.36-2.54a.484.484 0 0 0-.48-.41h-3.84c-.24 0-.43.17-.47.41l-.36 2.54c-.59.24-1.13.57-1.62.94l-2.39-.96c-.22-.08-.47 0-.59.22L2.74 8.87c-.12.21-.08.47.12.61l2.03 1.58c-.05.3-.09.63-.09.94s.02.64.07.94l-2.03 1.58a.49.49 0 0 0-.12.61l1.92 3.32c.12.22.37.29.59.22l2.39-.96c.5.38 1.03.7 1.62.94l.36 2.54c.05.24.24.41.48.41h3.84c.24 0 .44-.17.47-.41l.36-2.54c.59-.24 1.13-.56 1.62-.94l2.39.96c.22.08.47 0 .59-.22l1.92-3.32c.12-.22.07-.47-.12-.61l-2.01-1.58zM12 15.6c-1.98 0-3.6-1.62-3.6-3.6s1.62-3.6 3.6-3.6 3.6 1.62 3.6 3.6-1.62 3.6-3.6 3.6z"/></svg>
<div class="t m" style="left:53px;top:917px;font-size:14px;color:#3c4043;letter-spacing:0.35px">Admin</div>

<!-- RED ANNOTATIONS -->
<div class="a" style="left:0;top:4px;width:287px;height:270px;border:3px solid #fd1a1a;border-left-width:2px"></div>
<div class="a" style="left:8px;top:116px;width:245px;height:55px;border:3px solid #fd1a1a"></div>
<div class="a" style="left:8px;top:176px;width:247px;height:44px;border:3px solid #fd1a1a"></div>

<!-- scrollbar -->
<div class="a" style="left:1911px;top:62px;width:7px;height:405px;border-radius:3.5px;background:#d6d7db;border-left:1px solid #bfc0c4"></div>
<svg class="a" style="left:1909px;top:953px" width="8" height="10" viewBox="0 0 8 10"><path d="M8 1 Q7 7 3 10 H8 Z" fill="#111"/></svg>

</body></html>
